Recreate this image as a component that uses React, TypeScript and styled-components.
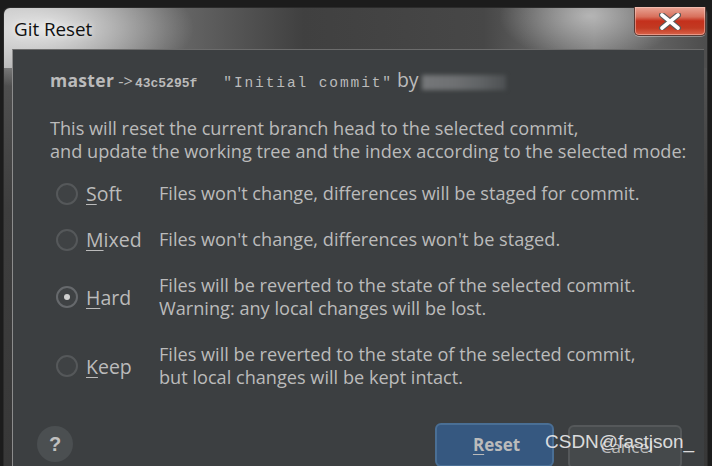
import React from "react";
import styled, { createGlobalStyle } from "styled-components";

const Global = createGlobalStyle`
  html, body { margin: 0; padding: 0; background: #1b1b1b; overflow: hidden; }
  #root { width: 712px; height: 466px; }
`;

const Screen = styled.div`
  position: relative;
  width: 712px;
  height: 466px;
  box-sizing: border-box;
  padding: 7px 0 0 3px;
  background: #1c1c1c;
  overflow: hidden;
  font-family: "Open Sans", "Noto Sans", sans-serif;
`;

const Window = styled.div`
  width: 705px;
  height: 459px;
  box-sizing: border-box;
  border: 1px solid #2b2b2b;
  border-bottom: none;
  border-radius: 7px 7px 0 0;
  padding: 0 3px 0 8px;
  display: flex;
  flex-direction: column;
  background:
    radial-gradient(ellipse 150px 60px at 40px 20px, rgba(255, 255, 255, 0.75), rgba(255, 255, 255, 0) 100%),
    radial-gradient(ellipse 90px 45px at 585px 8px, rgba(255, 255, 255, 0.45), rgba(255, 255, 255, 0) 100%),
    linear-gradient(90deg, #a9a9a9 0px, #6a6a6a 160px, #404040 300px, #474747 480px, #7a7a7a 590px, #4e4e4e 700px),
    linear-gradient(180deg, #5a5a5a 0px, #3e3e3e 200px, #383838 100%);
  background-repeat: no-repeat;
  background-size: 100% 100%, 100% 100%, 100% 60px, 100% 100%;
`;

const TitleBar = styled.div`
  height: 41px;
  flex: none;
  display: flex;
  justify-content: space-between;
  align-items: flex-start;
`;

const Title = styled.div`
  margin: 10px 0 0 2px;
  font-family: "Open Sans", "Noto Sans", sans-serif;
  font-size: 18.8px;
  line-height: 22px;
  color: #101010;
  text-shadow: 0 0 6px rgba(255, 255, 255, 0.9);
`;

const CloseButton = styled.div`
  width: 72px;
  height: 29px;
  margin: -1px -2px 0 0;
  box-sizing: border-box;
  border: 1px solid #5a3a34;
  border-top: none;
  border-radius: 0 0 5px 5px;
  box-shadow: inset 0 0 0 1px rgba(255, 220, 210, 0.45), 0 1px 0 rgba(255, 255, 255, 0.35);
  background: linear-gradient(180deg, #e9a596 0%, #d8705c 35%, #c4301c 50%, #c23a22 75%, #d9634a 100%);
  display: flex;
  align-items: center;
  justify-content: center;
`;

const Content = styled.div`
  flex: 1;
  min-height: 0;
  background: #3c3f41;
  border-top: 1px solid #6c6c6c;
  border-left: 1px solid #8c8c8c;
  display: flex;
  flex-direction: column;
  color: #bbbbbb;
  font-size: 18.15px;
`;

const Header = styled.div`
  margin: 20px 0 0 37px;
  line-height: 20px;
  display: flex;
  align-items: baseline;
  white-space: nowrap;
`;

const Bold = styled.span`
  font-weight: 700;
  font-size: 17.5px;
  letter-spacing: 0.3px;
`;

const Arrow = styled.span`
  font-size: 16.5px;
  margin: 0 2px 0 4px;
`;

const Hash = styled.span`
  font-family: "Liberation Mono", monospace;
  font-weight: 700;
  font-size: 13px;
`;

const Message = styled.span`
  font-family: "Liberation Mono", monospace;
  font-size: 14.5px;
  letter-spacing: 1.9px;
  margin-left: 26px;
`;

const By = styled.span`
  margin-left: 4px;
  font-size: 19.5px;
`;

const Redacted = styled.span`
  display: inline-block;
  width: 84px;
  height: 15px;
  margin-left: 3px;
  align-self: center;
  background: linear-gradient(90deg, #757779 0%, #6e7072 40%, #606365 70%, #4d5052 100%);
  filter: blur(2px);
`;

const Description = styled.p`
  margin: 23px 0 0 37px;
  line-height: 23px;
  white-space: nowrap;
`;

const Options = styled.div`
  margin: 19px 0 0 43px;
  display: grid;
  grid-template-columns: 22px 65px auto;
  column-gap: 8px;
  row-gap: 23px;
  align-items: center;
  line-height: 23px;
`;

const Radio = styled.span<{ $checked?: boolean }>`
  width: 22px;
  height: 22px;
  box-sizing: border-box;
  border-radius: 50%;
  border: 2px solid ${(p) => (p.$checked ? "#66696c" : "#55585a")};
  background: #3f4244;
  display: flex;
  align-items: center;
  justify-content: center;
  &::after {
    content: "";
    display: ${(p) => (p.$checked ? "block" : "none")};
    width: 6px;
    height: 6px;
    border-radius: 50%;
    background: #cfcfcf;
  }
`;

const Label = styled.span`
  font-size: 19.5px;
`;

const Mnemonic = styled.span`
  text-decoration: underline;
  text-underline-offset: 3px;
`;

const OptionText = styled.span`
  white-space: nowrap;
`;

const Footer = styled.div`
  margin-top: 32px;
  padding: 0 22px 0 24px;
  display: flex;
  align-items: flex-start;
`;

const HelpButton = styled.div`
  margin-top: 5px;
  width: 36px;
  height: 36px;
  border-radius: 50%;
  background: #4b4f51;
  color: #c0c0c0;
  font-family: "Liberation Sans", sans-serif;
  font-weight: 700;
  font-size: 20px;
  display: flex;
  align-items: center;
  justify-content: center;
`;

const Spacer = styled.div`
  flex: 1;
`;

const Button = styled.div<{ $primary?: boolean }>`
  box-sizing: border-box;
  height: 44px;
  margin-top: ${(p) => (p.$primary ? "2px" : "4px")};
  width: ${(p) => (p.$primary ? "119px" : "114px")};
  border-radius: 6px;
  border: 2px solid ${(p) => (p.$primary ? "#4a6f95" : "#55585a")};
  background: ${(p) => (p.$primary ? "#365880" : "#45494b")};
  color: #bbbbbb;
  font-weight: ${(p) => (p.$primary ? 700 : 400)};
  font-size: 17px;
  display: flex;
  align-items: center;
  justify-content: center;
  padding: 0 0 2px 4px;
  & + & {
    margin-left: 14px;
  }
`;

const Watermark = styled.div`
  position: absolute;
  left: 545px;
  top: 430px;
  font-family: "Liberation Sans", Arial, sans-serif;
  font-size: 19px;
  line-height: 24px;
  color: rgba(235, 235, 235, 0.92);
  white-space: nowrap;
`;

const CloseIcon = () => (
  <svg width="22" height="17" viewBox="0 0 22 17">
    <path d="M3 2 L19 15 M19 2 L3 15" stroke="#5a5a5a" strokeWidth="6" strokeLinecap="round" />
    <path d="M3 2 L19 15 M19 2 L3 15" stroke="#ffffff" strokeWidth="3.6" strokeLinecap="round" />
  </svg>
);

const options = [
  { key: "S", rest: "oft", lines: ["Files won't change, differences will be staged for commit."] },
  { key: "M", rest: "ixed", lines: ["Files won't change, differences won't be staged."] },
  {
    key: "H",
    rest: "ard",
    checked: true,
    lines: ["Files will be reverted to the state of the selected commit.", "Warning: any local changes will be lost."],
  },
  {
    key: "K",
    rest: "eep",
    lines: ["Files will be reverted to the state of the selected commit,", "but local changes will be kept intact."],
  },
];

export default function App() {
  return (
    <Screen>
      <Global />
      <Window>
        <TitleBar>
          <Title>Git Reset</Title>
          <CloseButton>
            <CloseIcon />
          </CloseButton>
        </TitleBar>
        <Content>
          <Header>
            <Bold>master</Bold>
            <Arrow>-&gt;</Arrow>
            <Hash>43c5295f</Hash>
            <Message>″Initial commit″</Message>
            <By>by</By>
            <Redacted />
          </Header>
          <Description>
            This will reset the current branch head to the selected commit,
            <br />
            and update the working tree and the index according to the selected mode:
          </Description>
          <Options>
            {options.map((o) => (
              <React.Fragment key={o.key}>
                <Radio $checked={o.checked} />
                <Label>
                  <Mnemonic>{o.key}</Mnemonic>
                  {o.rest}
                </Label>
                <OptionText>
                  {o.lines.map((l, i) => (
                    <React.Fragment key={i}>
                      {i > 0 && <br />}
                      {l}
                    </React.Fragment>
                  ))}
                </OptionText>
              </React.Fragment>
            ))}
          </Options>
          <Footer>
            <HelpButton>?</HelpButton>
            <Spacer />
            <Button $primary>
              <span>
                <Mnemonic>R</Mnemonic>eset
              </span>
            </Button>
            <Button>Cancel</Button>
          </Footer>
        </Content>
      </Window>
      <Watermark>CSDN@fastjson_</Watermark>
    </Screen>
  );
}
